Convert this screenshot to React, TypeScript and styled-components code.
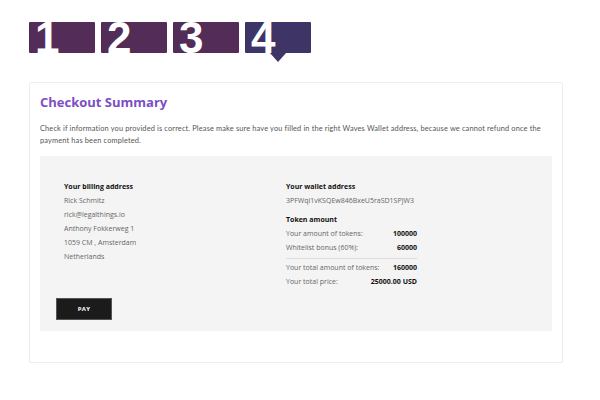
import React from "react";
import styled, { createGlobalStyle } from "styled-components";

const Global = createGlobalStyle`
  html, body { margin: 0; padding: 0; background: #fff; }
  body { font-family: "Open Sans", "Liberation Sans", sans-serif; }
`;

const Page = styled.div`
  width: 534px;
  padding: 22px 0 0 29px;
`;

const Steps = styled.div`
  display: flex;
  gap: 6px;
  height: 31px;
`;

const Step = styled.div<{ $active?: boolean }>`
  position: relative;
  width: 66px;
  height: 31px;
  padding-left: 6px;
  box-sizing: border-box;
  background: ${(p) => (p.$active ? "#3e3566" : "#532d57")};
  border-radius: 1px;
  &::after {
    content: "";
    display: ${(p) => (p.$active ? "block" : "none")};
    position: absolute;
    left: 50%;
    bottom: -9px;
    margin-left: -8px;
    border-left: 8px solid transparent;
    border-right: 8px solid transparent;
    border-top: 9px solid #3e3566;
  }
`;

const Digit = styled.span`
  display: block;
  font-family: "Liberation Sans", Arial, sans-serif;
  font-weight: 700;
  font-size: 44px;
  line-height: 31px;
  color: #fff;
`;

const Card = styled.div`
  margin-top: 29px;
  border: 1px solid #ececec;
  border-radius: 2px;
  padding: 8px 10px 31px;
`;

const Title = styled.h1`
  margin: 0;
  font-family: "Open Sans", sans-serif;
  font-weight: 700;
  font-size: 13px;
  line-height: 22px;
  color: #7c4ec5;
`;

const Intro = styled.p`
  margin: 10px 0 9px;
  font-family: Lato, sans-serif;
  font-size: 7.4px;
  letter-spacing: 0.15px;
  line-height: 12px;
  color: #555;
`;

const Panel = styled.div`
  background: #f4f4f4;
  padding: 24px 24px 11px;
`;

const Columns = styled.div`
  display: grid;
  grid-template-columns: 222px 131px;
`;

const Col = styled.div`
  display: flex;
  flex-direction: column;
`;

const Heading = styled.div<{ $gapTop?: number }>`
  font-family: "Open Sans", sans-serif;
  font-weight: 700;
  font-size: 7px;
  line-height: 14px;
  color: #111;
  margin-top: ${(p) => p.$gapTop ?? 0}px;
`;

const Line = styled.div`
  font-family: "Open Sans", sans-serif;
  font-size: 7px;
  line-height: 14px;
  color: #666;
`;

const Row = styled.div<{ $divider?: boolean }>`
  display: flex;
  justify-content: space-between;
  font-family: "Open Sans", sans-serif;
  font-size: 7px;
  line-height: 14px;
  color: #666;
  ${(p) =>
    p.$divider
      ? "border-top: 1px solid #dddddd; margin-top: 3px; padding-top: 2px;"
      : ""}
`;

const Value = styled.span`
  font-weight: 700;
  color: #111;
`;

const PayButton = styled.button`
  display: block;
  margin: 9px 0 0 -8px;
  width: 56px;
  height: 22px;
  background: #1b1b1b;
  border: 1px solid #555;
  color: #fff;
  font-family: "Open Sans", sans-serif;
  font-weight: 700;
  font-size: 6px;
  letter-spacing: 0.3px;
  padding: 0;
  cursor: pointer;
`;

export default function App() {
  return (
    <Page>
      <Global />
      <Steps>
        {[1, 2, 3, 4].map((n) => (
          <Step key={n} $active={n === 4}>
            <Digit>{n}</Digit>
          </Step>
        ))}
      </Steps>
      <Card>
        <Title>Checkout Summary</Title>
        <Intro>
          Check if information you provided is correct. Please make sure have you filled in the right Waves Wallet
          address, because we cannot refund once the payment has been completed.
        </Intro>
        <Panel>
          <Columns>
            <Col>
              <Heading>Your billing address</Heading>
              <Line>Rick Schmitz</Line>
              <Line>rick@legalthings.io</Line>
              <Line>Anthony Fokkerweg 1</Line>
              <Line>1059 CM , Amsterdam</Line>
              <Line>Netherlands</Line>
            </Col>
            <Col>
              <Heading>Your wallet address</Heading>
              <Line>3PFWqi1vKSQEw846BxeU5raSD1SPJW3</Line>
              <Heading $gapTop={5}>Token amount</Heading>
              <Row>
                <span>Your amount of tokens:</span>
                <Value>100000</Value>
              </Row>
              <Row>
                <span>Whitelist bonus (60%):</span>
                <Value>60000</Value>
              </Row>
              <Row $divider>
                <span>Your total amount of tokens:</span>
                <Value>160000</Value>
              </Row>
              <Row>
                <span>Your total price:</span>
                <Value>25000.00 USD</Value>
              </Row>
            </Col>
          </Columns>
          <PayButton>PAY</PayButton>
        </Panel>
      </Card>
    </Page>
  );
}
